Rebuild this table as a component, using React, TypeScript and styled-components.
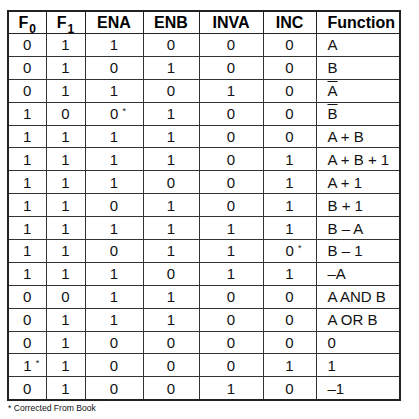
import styled, { createGlobalStyle } from 'styled-components';

const Global = createGlobalStyle`
  body {
    margin: 0;
    background: #fff;
    font-family: "Liberation Sans", Arial, sans-serif;
    color: #000;
  }
`;

const Page = styled.div`
  padding: 10px 0 0 7px;
`;
const Table = styled.table`
  border-collapse: collapse;
  width: 392px;
  table-layout: fixed;
  border: 2px solid #222;
`;
const HeadCell = styled.th<{ $left?: boolean }>`
  height: 21px;
  padding: 0;
  padding-left: ${({ $left }) => ($left ? '11px' : '0')};
  border: 1px solid #222;
  font-size: 16px;
  font-weight: bold;
  text-align: ${({ $left }) => ($left ? 'left' : 'center')};
  line-height: 1;
`;
const Cell = styled.td<{ $left?: boolean }>`
  height: 21.9px;
  padding: 0;
  padding-left: ${({ $left }) => ($left ? '11px' : '0')};
  border: 1px solid #333;
  font-size: 15px;
  color: #111;
  text-align: ${({ $left }) => ($left ? 'left' : 'center')};
  line-height: 1;
`;
const Sub = styled.sub`
  font-size: 12px;
  vertical-align: -5px;
  line-height: 0;
  margin-left: 1px;
`;
const Star = styled.span`
  font-size: 9px;
  vertical-align: 5px;
  margin-left: 4px;
  margin-right: -8px;
`;
const Bar = styled.span`
  text-decoration: overline;
  text-decoration-thickness: 1px;
`;
const Note = styled.div`
  font-size: 8.6px;
  color: #111;
  margin: 2px 0 0 1px;
`;

const widths = [38, 39, 58, 56, 64, 53, 84];

const rows: (string | JSX.Element)[][] = [
  ['0', '1', '1', '0', '0', '0', 'A'],
  ['0', '1', '0', '1', '0', '0', 'B'],
  ['0', '1', '1', '0', '1', '0', <Bar>A</Bar>],
  ['1', '0', '0*', '1', '0', '0', <Bar>B</Bar>],
  ['1', '1', '1', '1', '0', '0', 'A + B'],
  ['1', '1', '1', '1', '0', '1', 'A + B + 1'],
  ['1', '1', '1', '0', '0', '1', 'A + 1'],
  ['1', '1', '0', '1', '0', '1', 'B + 1'],
  ['1', '1', '1', '1', '1', '1', 'B \u2013 A'],
  ['1', '1', '0', '1', '1', '0*', 'B \u2013 1'],
  ['1', '1', '1', '0', '1', '1', '\u2013A'],
  ['0', '0', '1', '1', '0', '0', 'A AND B'],
  ['0', '1', '1', '1', '0', '0', 'A OR B'],
  ['0', '1', '0', '0', '0', '0', '0'],
  ['1*', '1', '0', '0', '0', '1', '1'],
  ['0', '1', '0', '0', '1', '0', '\u20131'],
];

const renderBit = (v: string) =>
  v.endsWith('*') ? (
    <>
      {v.slice(0, -1)}
      <Star>*</Star>
    </>
  ) : (
    v
  );

const App = () => {
  return (
    <Page>
      <Global />
      <Table>
        <colgroup>
          {widths.map((w, i) => (
            <col key={i} style={{ width: w }} />
          ))}
        </colgroup>
        <thead>
          <tr>
            <HeadCell>
              F<Sub>0</Sub>
            </HeadCell>
            <HeadCell>
              F<Sub>1</Sub>
            </HeadCell>
            <HeadCell>ENA</HeadCell>
            <HeadCell>ENB</HeadCell>
            <HeadCell>INVA</HeadCell>
            <HeadCell>INC</HeadCell>
            <HeadCell $left>Function</HeadCell>
          </tr>
        </thead>
        <tbody>
          {rows.map((r, i) => (
            <tr key={i}>
              {r.slice(0, 6).map((v, j) => (
                <Cell key={j}>{renderBit(v as string)}</Cell>
              ))}
              <Cell $left>{r[6]}</Cell>
            </tr>
          ))}
        </tbody>
      </Table>
      <Note>* Corrected From Book</Note>
    </Page>
  );
};

export default App;
